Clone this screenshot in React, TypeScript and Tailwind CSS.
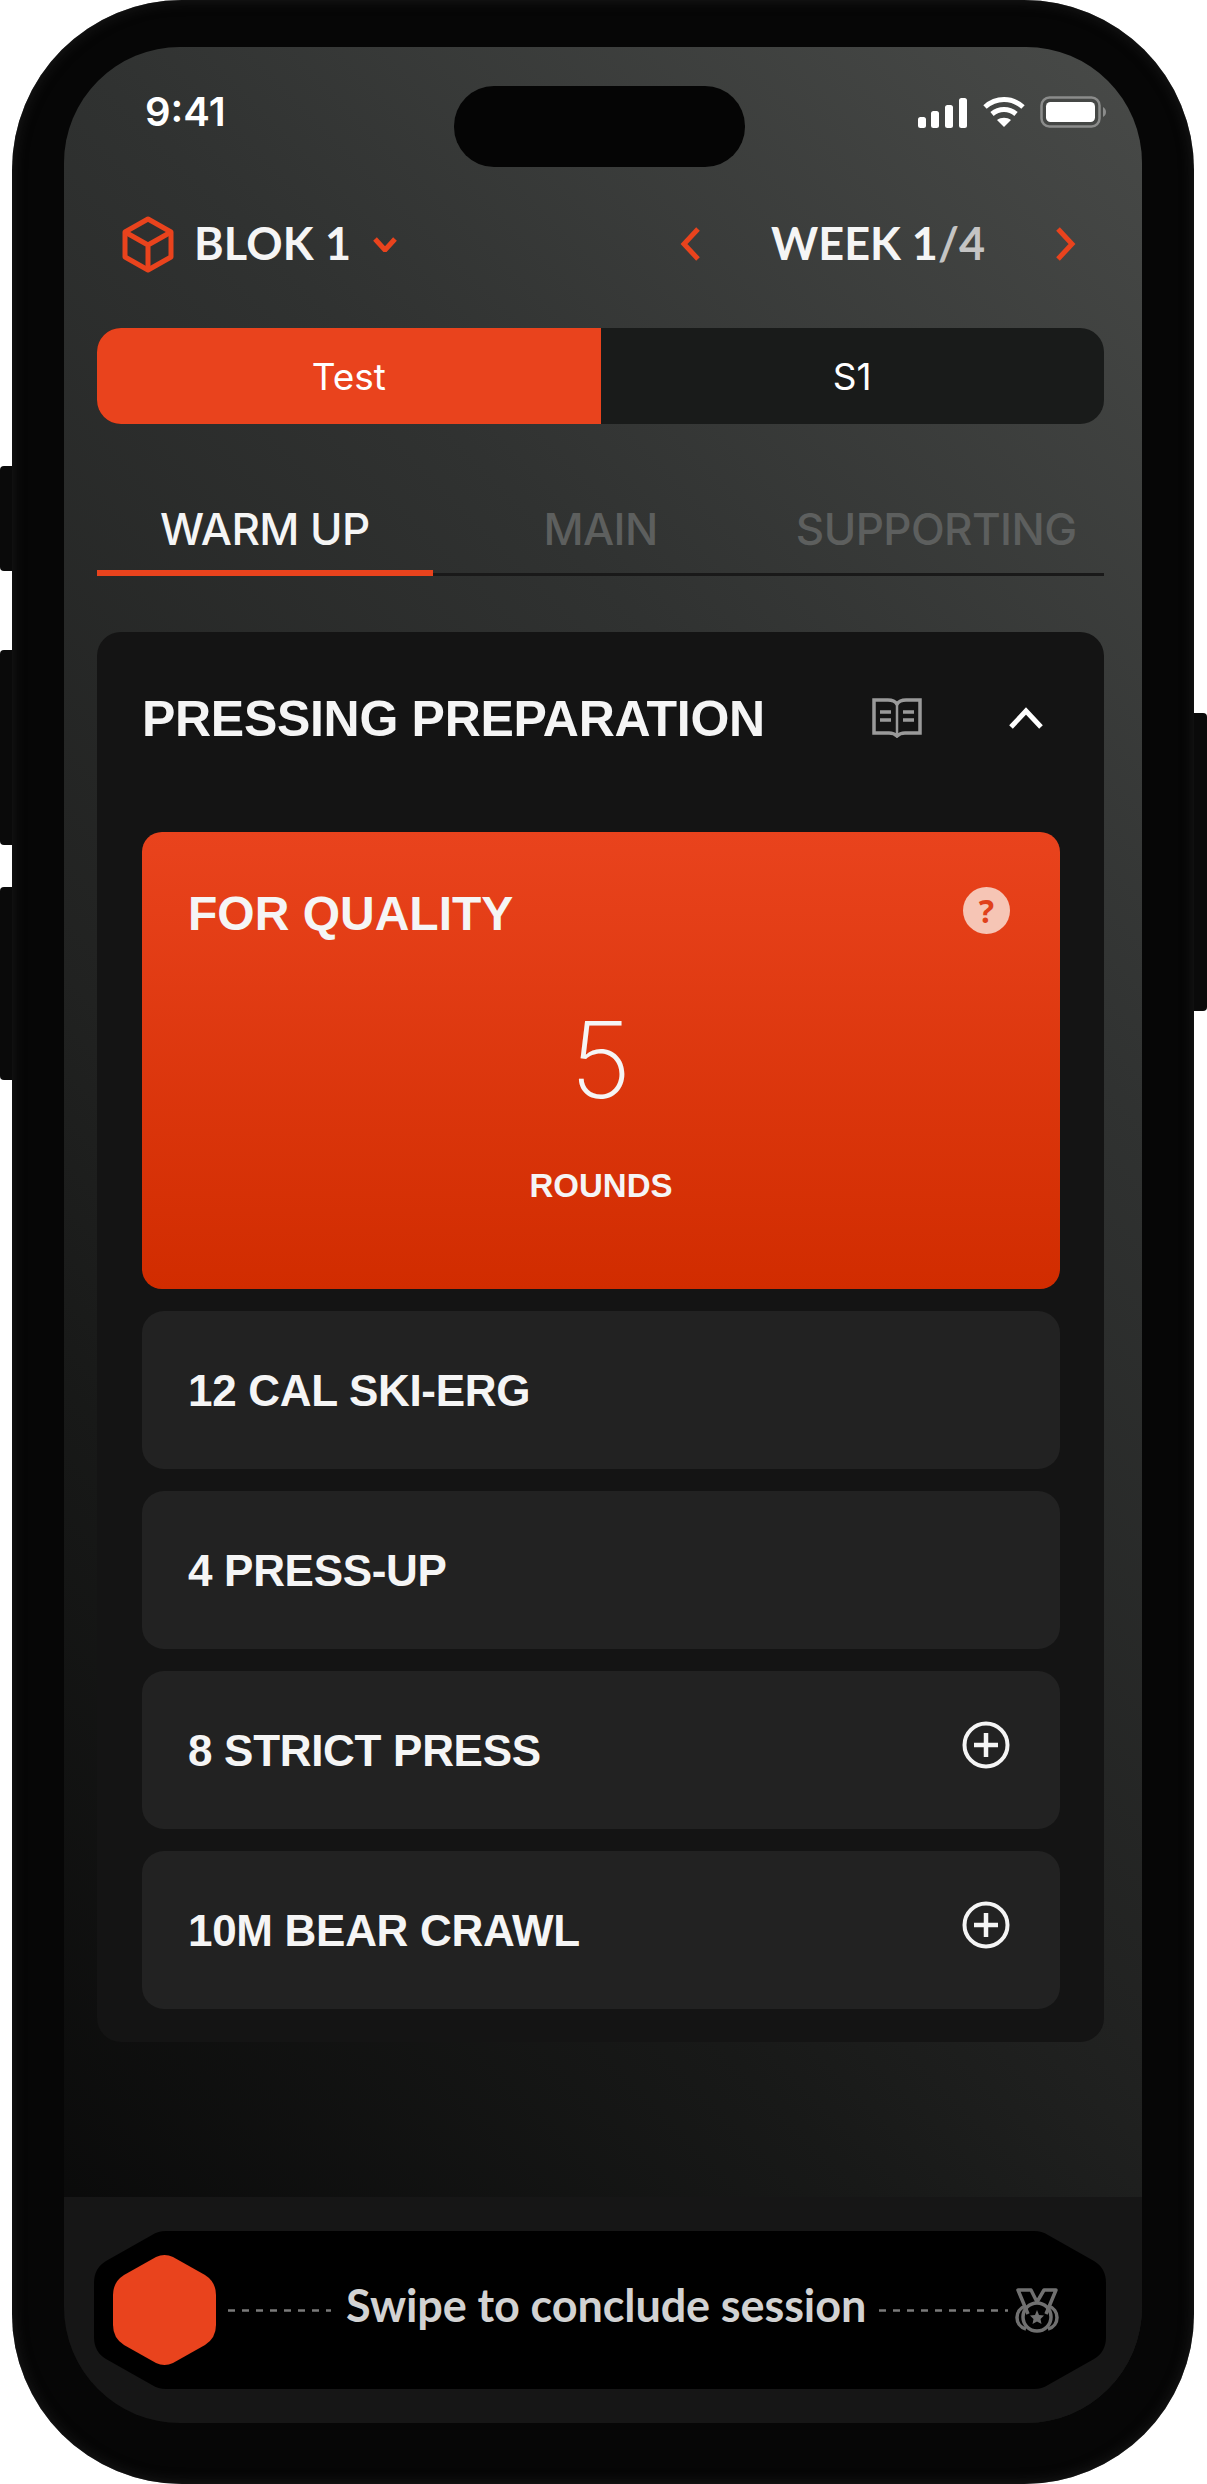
const grotesk = "font-['Liberation_Sans',Arial,sans-serif]";
const inter = "font-['Inter',sans-serif]";
const lato = "font-['Lato',sans-serif]";

const exercises = [
  { name: '12 CAL SKI-ERG', extra: false },
  { name: '4 PRESS-UP', extra: false },
  { name: '8 STRICT PRESS', extra: true },
  { name: '10M BEAR CRAWL', extra: true },
];

const CubeIcon = () => (
  <svg width="52" height="57" viewBox="0 0 52 57" fill="none" stroke="#e9431d" strokeWidth="5" strokeLinejoin="round">
    <path d="M26 3 49 16V41L26 54 3 41V16Z" />
    <path d="M3 16 26 29 49 16M26 29V54" />
  </svg>
);

const Chevron = ({ d, w, h, color = '#e9431d' }: { d: string; w: number; h: number; color?: string }) => (
  <svg width={w} height={h} viewBox={`0 0 ${w} ${h}`} fill="none" stroke={color} strokeWidth="5">
    <path d={d} />
  </svg>
);

const StatusIcons = () => (
  <div className="ml-auto flex items-center gap-[14px] pt-[10px]">
    <svg width="50" height="31" viewBox="0 0 50 31" fill="#fff">
      <rect x="0" y="20" width="8" height="11" rx="2.5" />
      <rect x="13" y="14" width="8" height="17" rx="2.5" />
      <rect x="27" y="8" width="8" height="23" rx="2.5" />
      <rect x="41" y="1" width="8" height="30" rx="2.5" />
    </svg>
    <svg width="44" height="32" viewBox="0 0 44 32" fill="none" stroke="#fff" strokeWidth="5">
      <path d="M3 11C14 1 30 1 41 11" />
      <path d="M10 18C17 12 27 12 34 18" />
      <path d="M22 31 15 24C19 21 25 21 29 24Z" fill="#fff" stroke="none" />
    </svg>
    <svg width="66" height="32" viewBox="0 0 66 32" fill="none">
      <rect x="1.5" y="1.5" width="58" height="29" rx="8" stroke="#8b8c8b" strokeWidth="2.5" />
      <rect x="6" y="6" width="49" height="20" rx="4.5" fill="#fff" />
      <path d="M63 11C65 12 66 14 66 16S65 20 63 21Z" fill="#8b8c8b" />
    </svg>
  </div>
);

const BookIcon = () => (
  <svg width="50" height="40" viewBox="0 0 50 40" fill="none" stroke="#9a9a9a" strokeWidth="3.5">
    <path d="M2 2H16C20 2 23 3 25 6 27 3 30 2 34 2H48V35H33C29 35 27 36 25 38 23 36 21 35 17 35H2Z" />
    <path d="M25 6V37" strokeWidth="2.5" />
    <path d="M8 14H19M8 22H19M31 14H42M31 22H42" />
  </svg>
);

const PlusCircle = () => (
  <svg width="48" height="48" viewBox="0 0 48 48" fill="none" stroke="#f5f5f5" strokeWidth="4">
    <circle cx="24" cy="24" r="21.5" />
    <path d="M12 24H36M24 12V36" strokeWidth="4.5" />
  </svg>
);

const MedalIcon = () => (
  <svg width="48" height="47" viewBox="0 0 48 47" fill="none" stroke="#707070" strokeWidth="3.5">
    <path d="M15 27 5 3H18L24 15 31 3H43L33 27" strokeLinejoin="round" />
    <circle cx="24" cy="30" r="14" />
    <path d="M13 19C1 22 1 39 13 42M35 19C47 22 47 39 35 42" />
    <path d="M24 23 26 28 31 28.500 27.500 32 28.500 37 24 34.500 19.500 37 20.500 32 17 28.500 22 28Z" fill="#707070" stroke="none" />
  </svg>
);

const DashLine = ({ w }: { w: number }) => (
  <svg width={w} height="3" viewBox={`0 0 ${w} 3`} className="shrink-0">
    <line x1="0" y1="1.500" x2={w} y2="1.500" stroke="#7a7a7a" strokeWidth="2.500" strokeDasharray="7 7" />
  </svg>
);

const App = () => {
  return (
    <div className="relative h-[2484px] w-[1207px] bg-white">
      {/* side buttons */}
      <div className="absolute left-0 top-[466px] h-[105px] w-[14px] rounded-l-[4px] bg-[#0a0a0a]" />
      <div className="absolute left-0 top-[650px] h-[195px] w-[14px] rounded-l-[4px] bg-[#0a0a0a]" />
      <div className="absolute left-0 top-[887px] h-[193px] w-[14px] rounded-l-[4px] bg-[#0a0a0a]" />
      <div className="absolute right-0 top-[713px] h-[298px] w-[15px] rounded-r-[4px] bg-[#0a0a0a]" />

      {/* phone body */}
      <div className="relative ml-[12px] h-[2484px] w-[1182px] rounded-[170px] bg-[#060606] pb-[61px] pl-[52px] pr-[52px] pt-[47px] shadow-[inset_0_0_14px_#1c1c1c]">
        <div className="flex h-[2376px] w-[1078px] flex-col overflow-hidden rounded-[116px] bg-[linear-gradient(225deg,#484a48_0%,#303231_31%,#212221_58%,#181918_70%,#070707_100%)]">
          {/* status bar */}
          <div className="mt-[39px] flex h-[81px] items-start pl-[81px] pr-[36px]">
            <span className={`mt-[2px] w-[309px] text-[40px] font-semibold leading-[48px] text-white ${inter}`}>9:41</span>
            <div className="h-[81px] w-[291px] rounded-[40px] bg-[#050505]" />
            <StatusIcons />
          </div>

          <div className="flex flex-col pl-[33px] pr-[38px]">
            {/* block and week */}
            <div className="mt-[47px] flex h-[60px] items-center justify-between pl-[25px] pr-[28px]">
              <div className="flex items-center">
                <CubeIcon />
                <span className={`-mt-[1px] ml-[20px] text-[45px] font-bold tracking-[0.2px] text-[#f5f5f5] ${lato}`}>BLOK 1</span>
                <span className="ml-[22px] flex"><Chevron d="M2 2 12 13 22 2" w={24} h={15} /></span>
              </div>
              <div className="flex items-center">
                <Chevron d="M18 2 4 17 18 32" w={20} h={34} />
                <span className={`-mt-[1px] mx-[71px] text-[45px] font-bold text-[#f5f5f5] ${lato}`}>
                  WEEK 1<span className="text-[#c4c4c4]">/4</span>
                </span>
                <Chevron d="M2 2 16 17 2 32" w={20} h={34} />
              </div>
            </div>

            {/* session toggle */}
            <div className={`mt-[54px] grid h-[96px] grid-cols-2 overflow-hidden rounded-[24px] bg-[#191b1a] text-[37px] text-white ${inter}`}>
              <div className="flex items-center justify-center bg-[#e9431d] pt-[1px]">Test</div>
              <div className="flex items-center justify-center pt-[1px]">S1</div>
            </div>

            {/* tabs */}
            <div className={`mt-[66px] grid h-[86px] grid-cols-3 border-b-[3px] border-[#191919] text-[44px] font-medium tracking-[-0.6px] ${inter}`}>
              <div className="-mb-[3px] flex items-start justify-center border-b-[6px] border-[#e9431d] pt-[6px] text-[#f5f5f5]">WARM UP</div>
              <div className="flex items-start justify-center pt-[6px] text-[#5d5f5e]">MAIN</div>
              <div className="flex items-start justify-center pt-[6px] text-[#5d5f5e]">SUPPORTING</div>
            </div>

            {/* exercise card */}
            <div className="mt-[56px] flex flex-col rounded-[24px] bg-[#141414] pb-[33px] pl-[45px] pr-[44px]">
              <div className="flex h-[200px] items-center pb-[28px]">
                <h2 className={`pt-[2px] text-[50px] font-bold tracking-[-0.3px] text-[#f5f5f5] ${grotesk}`}>PRESSING PREPARATION</h2>
                <div className="ml-auto mr-[17px] flex items-center gap-[87px]">
                  <BookIcon />
                  <Chevron d="M2 20 17 4 32 20" w={34} h={22} color="#ffffff" />
                </div>
              </div>

              <div className="relative flex h-[457px] flex-col items-center rounded-[20px] bg-[linear-gradient(180deg,#e9431d_0%,#d12c00_100%)]">
                <div className={`mt-[52px] w-full pl-[46px] text-[48px] font-bold leading-[60px] text-[#f5f5f5] ${grotesk}`}>FOR QUALITY</div>
                <div className="absolute right-[50px] top-[55px] flex h-[47px] w-[47px] items-center justify-center rounded-full bg-[#f6c5b5] text-[32px] font-bold text-[#e0401a]">?</div>
                <div className="mt-[56px] text-[106px] font-extralight leading-[120px] text-[#f5f5f5] font-['Inter',sans-serif]">5</div>
                <div className={`mt-[48px] text-[33px] font-bold leading-[36px] text-[#f5f5f5] ${grotesk}`}>ROUNDS</div>
              </div>

              <div className="mt-[22px] flex flex-col gap-[22px]">
                {exercises.map((exercise) => (
                  <div key={exercise.name} className="flex h-[158px] items-center justify-between rounded-[22px] bg-[#222222] pl-[46px] pr-[50px]">
                    <span className={`pt-[2px] text-[44px] font-bold tracking-[-0.3px] text-[#f5f5f5] ${grotesk}`}>{exercise.name}</span>
                    {exercise.extra && (
                      <span className="-mt-[10px] flex">
                        <PlusCircle />
                      </span>
                    )}
                  </div>
                ))}
              </div>
            </div>
          </div>

          {/* swipe bar */}
          <div className="mt-auto flex h-[226px] bg-[#161616] pl-[30px] pt-[34px]">
            <div className="flex h-[158px] w-[1012px] items-center bg-black pl-[19px] [clip-path:path('M72_0H940Q948_0_954_4L1000_30Q1012_37_1012_52V106Q1012_121_1000_128L954_154Q948_158_940_158H72Q64_158_58_154L12_128Q0_121_0_106V52Q0_37_12_30L58_4Q64_0_72_0Z')]">
              <div className="h-[112px] w-[103px] shrink-0 bg-[#e9431d] [clip-path:path('M43_3Q51.500_-1_60_3L92_21Q103_28_103_41V71Q103_84_92_91L60_109Q51.500_113_43_109L11_91Q0_84_0_71V41Q0_28_11_21Z')]" />
              <div className="ml-[12px]"><DashLine w={103} /></div>
              <span className={`-mt-[9px] ml-[15px] w-[533px] whitespace-nowrap text-[45px] font-bold tracking-[-0.1px] text-[#d2d2d2] ${lato}`}>Swipe to conclude session</span>
              <DashLine w={129} />
              <span className="ml-[5px] flex"><MedalIcon /></span>
            </div>
          </div>
        </div>
      </div>
    </div>
  );
};

export default App;
